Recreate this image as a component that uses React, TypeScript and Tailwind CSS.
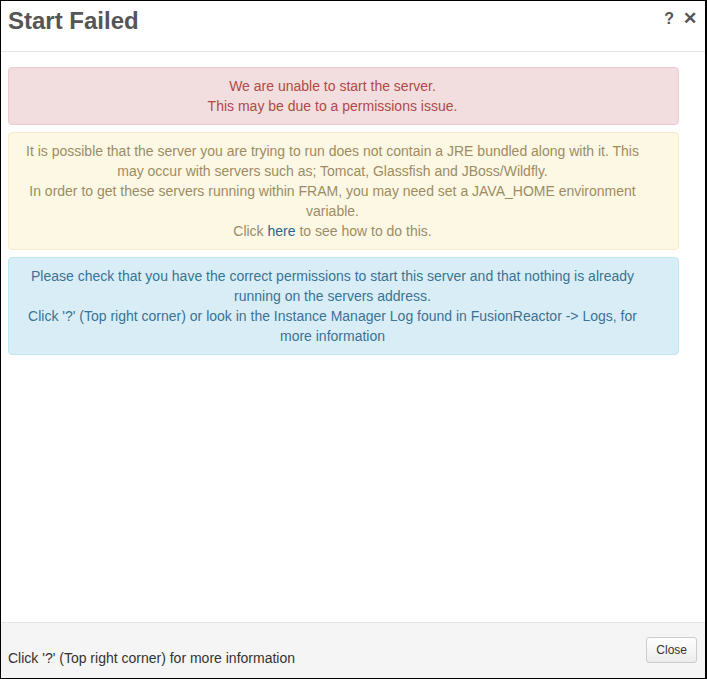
export default function App() {
  return (
    <div
      className="flex h-[679px] w-[707px] flex-col border border-r-2 border-black bg-white text-[14px] leading-[20px]"
      style={{ fontFamily: '"Liberation Sans", Arial, sans-serif' }}
    >
      <div className="flex h-[51px] items-start justify-between border-b border-[#e5e5e5] pl-[7px] pr-[8px]">
        <h1 className="mt-[5px] text-[24px] font-bold leading-[30px] text-[#555]">Start Failed</h1>
        <div className="mt-[8px] flex items-center gap-[9px] text-[16px] font-bold text-[#555]">
          <span>?</span>
          <span className="text-[17px]">✕</span>
        </div>
      </div>

      <div className="flex flex-1 flex-col gap-[7px] pl-[7px] pt-[15px]">
        <div className="w-[671px] rounded-[4px] border border-[#ebccd1] bg-[#f2dede] py-[8px] pl-[15px] pr-[37px] text-center text-[#b04a48]">
          We are unable to start the server.
          <br />
          This may be due to a permissions issue.
        </div>
        <div className="w-[671px] rounded-[4px] border border-[#faebcc] bg-[#fcf8e3] py-[8px] pl-[15px] pr-[37px] text-center text-[#9c8c66]">
          It is possible that the server you are trying to run does not contain a JRE bundled along with it. This
          may occur with servers such as; Tomcat, Glassfish and JBoss/Wildfly.
          <br />
          In order to get these servers running within FRAM, you may need set a JAVA_HOME environment
          variable.
          <br />
          Click <a className="text-[#2a6496]">here</a> to see how to do this.
        </div>
        <div className="w-[671px] rounded-[4px] border border-[#bce8f1] bg-[#d9edf7] py-[8px] pl-[15px] pr-[37px] text-center text-[#3a7393]">
          Please check that you have the correct permissions to start this server and that nothing is already
          running on the servers address.
          <br />
          Click '?' (Top right corner) or look in the Instance Manager Log found in FusionReactor -&gt; Logs, for
          more information
        </div>
      </div>

      <div className="flex h-[56px] items-start justify-between border-t border-[#e5e5e5] bg-[#f5f5f5] pl-[7px] pr-[8px]">
        <span className="mt-[25px] text-[#333]">Click '?' (Top right corner) for more information</span>
        <button className="mt-[14px] h-[26px] rounded-[3px] border border-[#ccc] bg-gradient-to-b from-white to-[#ececec] px-[9px] text-[12px] leading-[18px] text-[#333]">
          Close
        </button>
      </div>
    </div>
  );
}
